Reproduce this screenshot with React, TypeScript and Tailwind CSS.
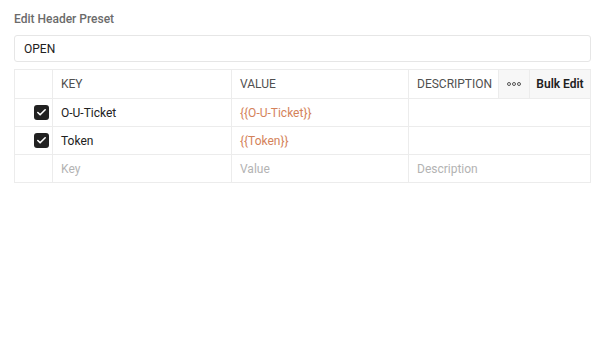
import { Check } from "lucide-react";

const rows = [
  { key: "O-U-Ticket", value: "{{O-U-Ticket}}" },
  { key: "Token", value: "{{Token}}" },
];

const cols = "grid grid-cols-[38px_179px_177px_90px_31px_1fr]";

const Checkbox = () => (
  <span className="flex h-[15px] w-[15px] items-center justify-center rounded-[3px] bg-[#212121]">
    <Check size={11} strokeWidth={3.5} className="text-white" />
  </span>
);

export default function App() {
  return (
    <div
      className="h-[347px] w-[598px] bg-white pl-[14px] pr-[7px] pt-[10px] text-[12px] text-[#212121]"
      style={{ fontFamily: "Roboto, 'Noto Sans', sans-serif" }}
    >
      <div className="mb-[7px] text-[12px] font-medium text-[#6b6b6b]">Edit Header Preset</div>

      {/* preset name */}
      <div className="flex h-[27px] items-center rounded-[3px] border border-[#e6e6e6] px-[9px] text-[12px]">
        OPEN
      </div>

      {/* headers table */}
      <div className="mt-[7px] border border-[#ececec]">
        <div className={`${cols} h-[28px] text-[12px] text-[#505050]`}>
          <div className="border-r border-[#ececec]" />
          <div className="flex items-center border-r border-[#ececec] px-[8px]">KEY</div>
          <div className="flex items-center border-r border-[#ececec] px-[8px]">VALUE</div>
          <div className="flex items-center border-r border-[#ececec] px-[8px]">DESCRIPTION</div>
          <div className="flex items-center justify-center border-r border-[#ececec] bg-[#f7f7f7]">
            <span className="flex gap-[1px]">
              <span className="h-[4px] w-[4px] rounded-full border border-[#555]" />
              <span className="h-[4px] w-[4px] rounded-full border border-[#555]" />
              <span className="h-[4px] w-[4px] rounded-full border border-[#555]" />
            </span>
          </div>
          <div className="flex items-center justify-center bg-[#f7f7f7] font-semibold text-[#212121]">
            Bulk Edit
          </div>
        </div>

        {rows.map((r) => (
          <div key={r.key} className={`${cols} h-[28px] border-t border-[#ececec]`}>
            <div className="flex items-center border-r border-[#ececec] pl-[19px]">
              <Checkbox />
            </div>
            <div className="flex items-center border-r border-[#ececec] px-[8px]">{r.key}</div>
            <div className="flex items-center border-r border-[#ececec] px-[8px] text-[#d4825a]">
              {r.value}
            </div>
            <div className="col-span-3" />
          </div>
        ))}

        <div className={`${cols} h-[28px] border-t border-[#ececec] text-[#b3b3b3]`}>
          <div className="border-r border-[#ececec]" />
          <div className="flex items-center border-r border-[#ececec] px-[8px]">Key</div>
          <div className="flex items-center border-r border-[#ececec] px-[8px]">Value</div>
          <div className="col-span-3 flex items-center px-[8px]">Description</div>
        </div>
      </div>
    </div>
  );
}
